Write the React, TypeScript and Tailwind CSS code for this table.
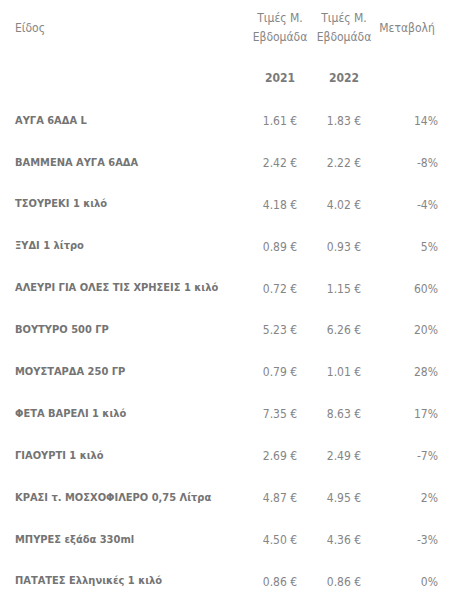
const rows = [
  { name: 'ΑΥΓΑ 6ΑΔΑ L', y2021: '1.61 €', y2022: '1.83 €', change: '14%' },
  { name: 'ΒΑΜΜΕΝΑ ΑΥΓΑ 6ΑΔΑ', y2021: '2.42 €', y2022: '2.22 €', change: '-8%' },
  { name: 'ΤΣΟΥΡΕΚΙ 1 κιλό', y2021: '4.18 €', y2022: '4.02 €', change: '-4%' },
  { name: 'ΞΥΔΙ 1 λίτρο', y2021: '0.89 €', y2022: '0.93 €', change: '5%' },
  { name: 'ΑΛΕΥΡΙ ΓΙΑ ΟΛΕΣ ΤΙΣ ΧΡΗΣΕΙΣ 1 κιλό', y2021: '0.72 €', y2022: '1.15 €', change: '60%' },
  { name: 'ΒΟΥΤΥΡΟ 500 ΓΡ', y2021: '5.23 €', y2022: '6.26 €', change: '20%' },
  { name: 'ΜΟΥΣΤΑΡΔΑ 250 ΓΡ', y2021: '0.79 €', y2022: '1.01 €', change: '28%' },
  { name: 'ΦΕΤΑ ΒΑΡΕΛΙ 1 κιλό', y2021: '7.35 €', y2022: '8.63 €', change: '17%' },
  { name: 'ΓΙΑΟΥΡΤΙ 1 κιλό', y2021: '2.69 €', y2022: '2.49 €', change: '-7%' },
  { name: 'ΚΡΑΣΙ τ. ΜΟΣΧΟΦΙΛΕΡΟ 0,75 Λίτρα', y2021: '4.87 €', y2022: '4.95 €', change: '2%' },
  { name: 'ΜΠΥΡΕΣ εξάδα 330ml', y2021: '4.50 €', y2022: '4.36 €', change: '-3%' },
  { name: 'ΠΑΤΑΤΕΣ Ελληνικές 1 κιλό', y2021: '0.86 €', y2022: '0.86 €', change: '0%' },
];

const cols = 'grid grid-cols-[233px_64px_64px_62px] items-center';

export default function App() {
  return (
    <div className="min-h-[601px] bg-white pl-[15px] font-['DejaVu_Sans_Condensed','DejaVu_Sans',sans-serif] text-[12px] text-[#858585]">
      <div className={`${cols} h-[56px] leading-[19px]`}>
        <div>Είδος</div>
        <div className="text-center">
          Τιμές Μ.
          <br />
          Εβδομάδα
        </div>
        <div className="text-center">
          Τιμές Μ.
          <br />
          Εβδομάδα
        </div>
        <div className="text-center">Μεταβολή</div>
      </div>
      <div className={`${cols} h-[44px]`}>
        <div />
        <div className="text-center font-bold text-[#7a7a7a]">2021</div>
        <div className="text-center font-bold text-[#7a7a7a]">2022</div>
        <div />
      </div>
      {rows.map((r) => (
        <div key={r.name} className={`${cols} h-[41.9px]`}>
          <div className="text-[11px] font-bold text-[#747474]">{r.name}</div>
          <div className="text-center">{r.y2021}</div>
          <div className="text-center">{r.y2022}</div>
          <div className="text-right">{r.change}</div>
        </div>
      ))}
    </div>
  );
}
